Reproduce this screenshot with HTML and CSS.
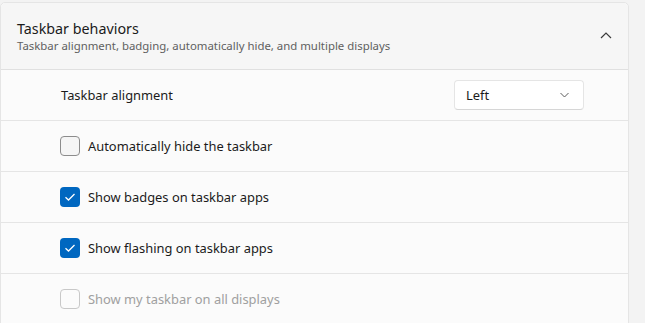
FILE: index.html
```html
<!DOCTYPE html>
<html lang="en">
<head>
    <meta charset="UTF-8">
    <title>Taskbar behaviors</title>
    <link rel="stylesheet" href="styles.css">
</head>
<body>
    <div class="settings-card">
        <!-- Expander header -->
        <div class="expander-header">
            <div class="header-text">
                <div class="title">Taskbar behaviors</div>
                <div class="subtitle">Taskbar alignment, badging, automatically hide, and multiple displays</div>
            </div>
            <svg class="chevron-up" width="12" height="8" viewBox="0 0 12 8">
                <path d="M1 7 L6 2 L11 7" fill="none" stroke="#3b3b3b" stroke-width="1.2"/>
            </svg>
        </div>

        <!-- Alignment row -->
        <div class="row row-align">
            <span class="row-label">Taskbar alignment</span>
            <div class="combo">
                <span>Left</span>
                <svg width="9" height="6" viewBox="0 0 9 6">
                    <path d="M0.5 1 L4.5 5 L8.5 1" fill="none" stroke="#5c5c5c" stroke-width="1"/>
                </svg>
            </div>
        </div>

        <div class="row">
            <span class="checkbox"></span>
            <span class="row-label">Automatically hide the taskbar</span>
        </div>

        <div class="row">
            <span class="checkbox checked">
                <svg width="12" height="10" viewBox="0 0 12 10">
                    <path d="M1.5 5.2 L4.5 8 L10.5 2" fill="none" stroke="#fff" stroke-width="1.3"/>
                </svg>
            </span>
            <span class="row-label">Show badges on taskbar apps</span>
        </div>

        <div class="row">
            <span class="checkbox checked">
                <svg width="12" height="10" viewBox="0 0 12 10">
                    <path d="M1.5 5.2 L4.5 8 L10.5 2" fill="none" stroke="#fff" stroke-width="1.3"/>
                </svg>
            </span>
            <span class="row-label">Show flashing on taskbar apps</span>
        </div>

        <div class="row disabled">
            <span class="checkbox"></span>
            <span class="row-label">Show my taskbar on all displays</span>
        </div>
    </div>
</body>
</html>
```

FILE: styles.css
```css
body {
    margin: 0;
    padding-top: 2px;
    background-color: #f3f3f3;
    font-family: "Noto Sans", "Open Sans", sans-serif;
    color: #1b1b1b;
    height: 321px;
    overflow: hidden;
}

.settings-card {
    width: 627px;
    border: 1px solid #e5e5e5;
    border-radius: 5px 5px 0 0;
    background-color: #fbfbfb;
}

.expander-header {
    display: flex;
    align-items: center;
    justify-content: space-between;
    height: 66px;
    padding: 0 16px 0 16px;
    background-color: #f6f6f6;
    border-bottom: 1px solid #e0e0e0;
    border-radius: 5px 5px 0 0;
}

.header-text {
    padding-top: 2px;
}

.title {
    font-size: 14.3px;
    line-height: 18px;
}

.subtitle {
    font-size: 11.4px;
    line-height: 16px;
    color: #606060;
}

.chevron-up {
    margin-top: -2px;
}

.row {
    display: flex;
    align-items: center;
    height: 50px;
    padding-left: 59px;
    border-top: 1px solid #e5e5e5;
    font-size: 12.9px;
}

.row-align {
    border-top: none;
    padding-left: 60px;
    justify-content: space-between;
    padding-right: 44px;
}

.combo {
    display: flex;
    align-items: center;
    justify-content: space-between;
    width: 103px;
    height: 28px;
    padding: 0 14px 0 11px;
    background-color: #ffffff;
    border: 1px solid #e5e5e5;
    border-bottom-color: #d6d6d6;
    border-radius: 4px;
}

.checkbox {
    display: flex;
    align-items: center;
    justify-content: center;
    box-sizing: border-box;
    width: 20px;
    height: 20px;
    margin-right: 8px;
    border: 1px solid #8c8c8c;
    border-radius: 4px;
    background-color: #f5f5f5;
}

.checkbox.checked {
    border: none;
    background-color: #0067c0;
}

.disabled {
    color: #a0a0a0;
}

.disabled .checkbox {
    border-color: #c8c8c8;
    background-color: #fbfbfb;
}
```
